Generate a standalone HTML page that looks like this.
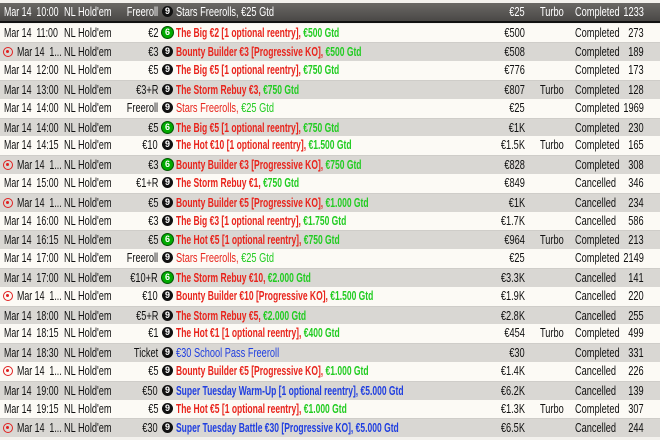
<!DOCTYPE html>
<html><head><meta charset="utf-8"><style>
html,body{margin:0;padding:0;width:660px;height:440px;overflow:hidden;background:#f3f1ed;}
body{font-family:"Liberation Sans",sans-serif;font-size:13px;color:#111;}
.r{position:absolute;left:0;width:660px;height:18.8px;line-height:18.8px;white-space:nowrap;}
.r.a{background:#fcfaf5;}
.r.b{background:#d9d7d3;border-top:1px solid #cfcdc9;box-sizing:border-box;}
.h{position:absolute;left:0;top:3px;width:660px;height:18px;line-height:18px;background:linear-gradient(#6a6865,#4a4846);color:#fff;border-bottom:2px solid #111;white-space:nowrap;}
.r span,.h span{position:absolute;top:0;transform:scaleX(0.71);transform-origin:left center;}
.d,.d2{transform:scaleX(0.68)!important}
.d{left:4px}.g{left:64px}.bi{right:502px;text-align:right;transform-origin:right center!important}
.r span.ic,.h span.ic,.r span.tg{transform:none;}
.ic{left:162px;top:3px!important;width:11px;height:11px;border-radius:50%;background:#111;color:#fff;font-size:9px;line-height:11px;text-align:center;font-weight:bold;}
.ic.gr{background:#0a0;box-shadow:0 0 0 1px #050;}
.r span.n,.h span.n{left:176px;font-weight:bold;transform:scaleX(0.655);}
.rd{color:#e8241c}.gn{color:#22cc22}.bl{color:#1f3ee0}
.p{right:135px;text-align:right;transform-origin:right center!important}.t{left:540px}.s{left:575px}.c{right:16px;text-align:right;transform-origin:right center!important}
.tg{left:3px;top:4px!important;width:10px;height:10px;border-radius:50%;border:1.5px solid #e02020;box-sizing:border-box;}
.tg:after{content:"";position:absolute;left:2px;top:2px;width:3px;height:3px;border-radius:50%;background:#e02020;}
.d2{left:17px}
</style></head><body>
<div class="h"><span class="d">Mar 14&nbsp; 10:00</span><span class="g">NL Hold'em</span><span class="bi">Freeroll</span><span class="ic" style="top:3px;background:#111">9</span><span class="n" style="font-weight:normal;transform:scaleX(0.71)">Stars Freerolls, €25 Gtd</span><span class="p">€25</span><span class="t">Turbo</span><span class="s">Completed</span><span class="c">1233</span></div>
<div id="rows"></div>
<script>
var R=[
["Mar 14  11:00",0,"€2",1,[["The Big €2 [1 optional reentry], ","rd"],["€500 Gtd","gn"]],"€500","","Completed","273"],
["",1,"€3",0,[["Bounty Builder €3 [Progressive KO], ","rd"],["€500 Gtd","gn"]],"€508","","Completed","189"],
["Mar 14  12:00",0,"€5",0,[["The Big €5 [1 optional reentry], ","rd"],["€750 Gtd","gn"]],"€776","","Completed","173"],
["Mar 14  13:00",0,"€3+R",0,[["The Storm Rebuy €3, ","rd"],["€750 Gtd","gn"]],"€807","Turbo","Completed","128"],
["Mar 14  14:00",0,"Freeroll",0,[["Stars Freerolls, ","rd"],["€25 Gtd","gn"]],"€25","","Completed","1969",1],
["Mar 14  14:00",0,"€5",1,[["The Big €5 [1 optional reentry], ","rd"],["€750 Gtd","gn"]],"€1K","","Completed","230"],
["Mar 14  14:15",0,"€10",0,[["The Hot €10 [1 optional reentry], ","rd"],["€1.500 Gtd","gn"]],"€1.5K","Turbo","Completed","165"],
["",1,"€3",1,[["Bounty Builder €3 [Progressive KO], ","rd"],["€750 Gtd","gn"]],"€828","","Completed","308"],
["Mar 14  15:00",0,"€1+R",0,[["The Storm Rebuy €1, ","rd"],["€750 Gtd","gn"]],"€849","","Cancelled","346"],
["",1,"€5",0,[["Bounty Builder €5 [Progressive KO], ","rd"],["€1.000 Gtd","gn"]],"€1K","","Cancelled","234"],
["Mar 14  16:00",0,"€3",0,[["The Big €3 [1 optional reentry], ","rd"],["€1.750 Gtd","gn"]],"€1.7K","","Cancelled","586"],
["Mar 14  16:15",0,"€5",1,[["The Hot €5 [1 optional reentry], ","rd"],["€750 Gtd","gn"]],"€964","Turbo","Completed","213"],
["Mar 14  17:00",0,"Freeroll",0,[["Stars Freerolls, ","rd"],["€25 Gtd","gn"]],"€25","","Completed","2149",1],
["Mar 14  17:00",0,"€10+R",1,[["The Storm Rebuy €10, ","rd"],["€2.000 Gtd","gn"]],"€3.3K","","Cancelled","141"],
["",1,"€10",0,[["Bounty Builder €10 [Progressive KO], ","rd"],["€1.500 Gtd","gn"]],"€1.9K","","Cancelled","220"],
["Mar 14  18:00",0,"€5+R",0,[["The Storm Rebuy €5, ","rd"],["€2.000 Gtd","gn"]],"€2.8K","","Cancelled","255"],
["Mar 14  18:15",0,"€1",0,[["The Hot €1 [1 optional reentry], ","rd"],["€400 Gtd","gn"]],"€454","Turbo","Completed","499"],
["Mar 14  18:30",0,"Ticket",0,[["€30 School Pass Freeroll","bl"]],"€30","","Completed","331",1],
["",1,"€5",0,[["Bounty Builder €5 [Progressive KO], ","rd"],["€1.000 Gtd","gn"]],"€1.4K","","Cancelled","226"],
["Mar 14  19:00",0,"€50",0,[["Super Tuesday Warm-Up [1 optional reentry], €5.000 Gtd","bl"]],"€6.2K","","Cancelled","139"],
["Mar 14  19:15",0,"€5",0,[["The Hot €5 [1 optional reentry], ","rd"],["€1.000 Gtd","gn"]],"€1.3K","Turbo","Completed","307"],
["",1,"€30",0,[["Super Tuesday Battle €30 [Progressive KO], €5.000 Gtd","bl"]],"€6.5K","","Cancelled","244"]
];
var h="";
R.forEach(function(r,i){
 var top=23.6+i*18.8;
 h+='<div class="r '+(i%2?'b':'a')+'" style="top:'+top+'px">';
 if(r[1]) h+='<span class="tg"></span><span class="d2">Mar 14&nbsp; 1...</span>';
 else h+='<span class="d">'+r[0].replace("  ","&nbsp; ")+'</span>';
 h+='<span class="g">NL Hold\'em</span><span class="bi">'+r[2]+'</span>';
 h+='<span class="ic'+(r[3]?' gr':'')+'">'+(r[3]?'6':'9')+'</span><span class="n"'+(r[9]?' style="font-weight:normal;transform:scaleX(0.71)"':'')+'>';
 r[4].forEach(function(s){h+='<b class="'+s[1]+'" style="font-weight:inherit">'+s[0]+'</b>';});
 h+='</span><span class="p">'+r[5]+'</span><span class="t">'+r[6]+'</span><span class="s">'+r[7]+'</span><span class="c">'+r[8]+'</span></div>';
});
document.getElementById("rows").innerHTML=h;
</script>
</body></html>
